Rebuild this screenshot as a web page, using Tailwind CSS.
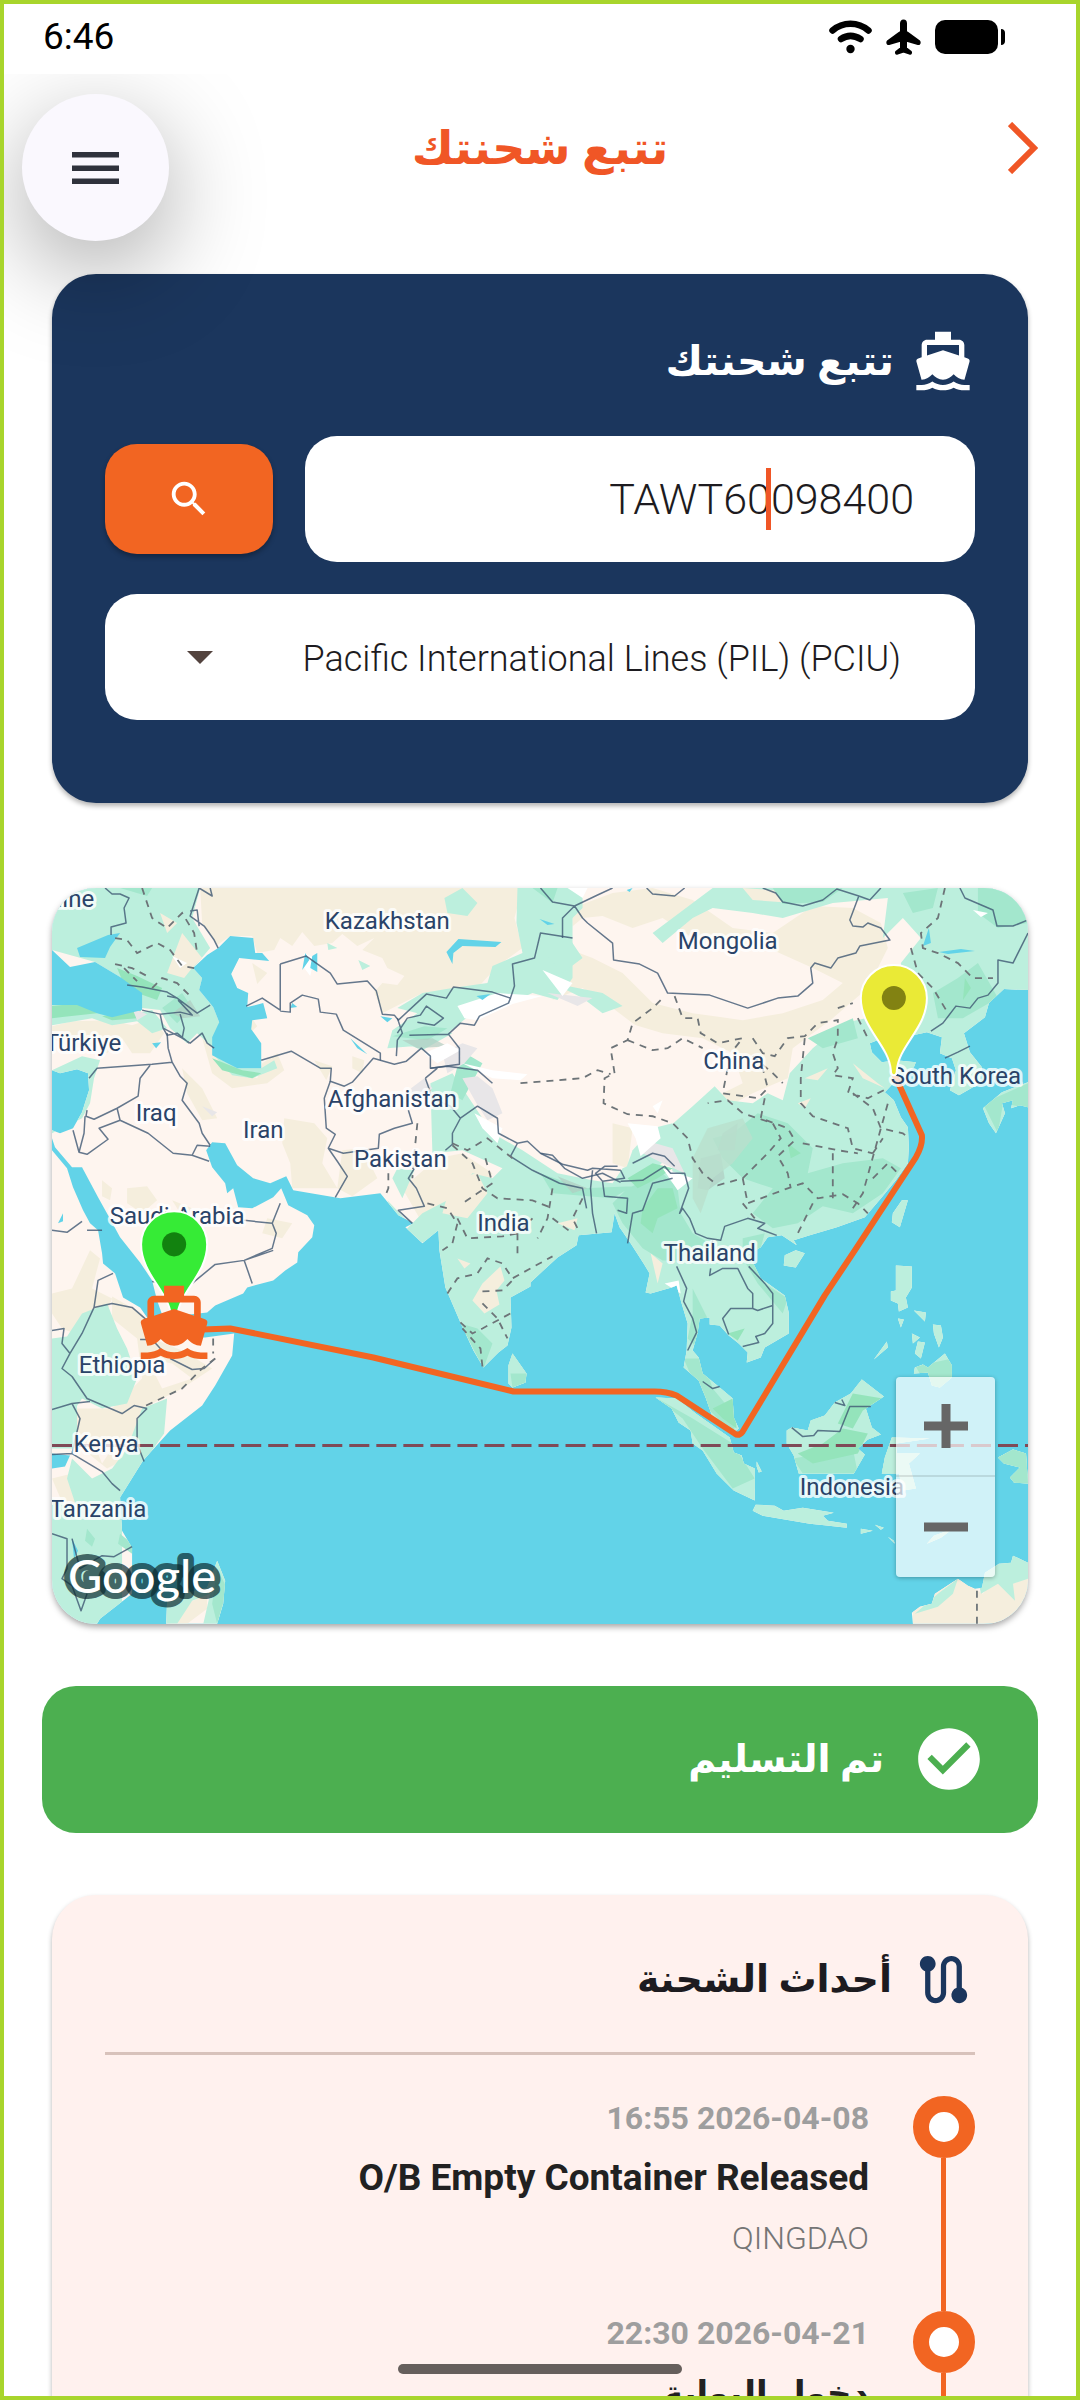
<!DOCTYPE html>
<html lang="ar" dir="rtl">
<head>
    <meta charset="UTF-8">
    <meta name="viewport" content="width=device-width, initial-scale=1.0">
    <title>تتبع شحنتك</title>
    <script src="https://cdn.jsdelivr.net/npm/@tailwindcss/browser@4"></script>
    <style>
        body {
            font-family: Roboto, 'DejaVu Sans', sans-serif;
        }
        .label {
            font-size: 24px;
            fill: #2a4368;
            stroke: rgba(255, 255, 255, 0.8);
            stroke-width: 6px;
            stroke-linejoin: round;
            paint-order: stroke;
            text-anchor: middle;
        }
    </style>
</head>
<body class="relative h-screen overflow-hidden bg-white text-[#1d1b20]">

    <!-- Status bar -->
    <div dir="ltr" class="relative z-20 flex h-[74px] items-center justify-between bg-white pl-[43px] pr-[75px] text-black">
        <span class="text-[37px] leading-[44px]">6:46</span>
        <div class="flex items-center gap-[14px]">
            <svg class="h-[34px] w-[43px]" viewBox="0 0 43 34" fill="none" stroke="#000" stroke-linecap="round">
                <path d="M3.5 10.5C14 1.5 29 1.5 39.5 10.500" stroke-width="6.5"/>
                <path d="M12 19C18 15 25 15 31.5 19" stroke-width="6.5"/>
                <circle cx="21.5" cy="29" r="4.2" fill="#000" stroke="none"/>
            </svg>
            <svg class="h-[36px] w-[35px]" viewBox="0 0 35 36" fill="#000" stroke="#000" stroke-width="2" stroke-linejoin="round">
                <path d="M17.5 1.5C15.8 1.5 15 3 15 4.5V12.5L2 22C1 23 1 25.5 3 25L15 21.5V29L10.5 32.5C9.5 33.5 10 35 11.5 34.5L17.5 32.5L23.5 34.5C25 35 25.5 33.5 24.5 32.5L20 29V21.5L32 25C34 25.5 34 23 33 22L20 12.5V4.5C20 3 19.2 1.5 17.5 1.5Z"/>
            </svg>
            <svg class="h-[34px] w-[70px]" viewBox="0 0 70 34" fill="#000">
                <rect x="0" y="0" width="63" height="34" rx="10"/>
                <path d="M66 9C69 9 70 11 70 13V21C70 23 69 25 66 25Z"/>
            </svg>
        </div>
    </div>

    <!-- Floating menu button -->
    <button type="button" aria-label="القائمة" class="absolute left-[22px] top-[94px] z-10 flex size-[147px] items-center justify-center rounded-full bg-[#faf8fe] shadow-[0_28px_96px_rgba(0,0,0,0.34)]">
        <svg class="h-[32px] w-[47px]" viewBox="0 0 47 32" fill="#2f323c">
            <rect width="47" height="5.5"/>
            <rect y="13.5" width="47" height="5.5"/>
            <rect y="26.5" width="47" height="5.5"/>
        </svg>
    </button>

    <header class="relative flex h-[148px] items-center justify-center">
        <h1 class="text-[46px] font-bold leading-[60px] text-[#f05626]">تتبع شحنتك</h1>
        <a href="#" aria-label="رجوع" class="absolute right-[42px]">
            <svg class="h-[52px] w-[30px]" viewBox="0 0 30 52" fill="none" stroke="#f05626" stroke-width="6">
                <path d="M2 2L26 26L2 50"/>
            </svg>
        </a>
    </header>

    <main class="px-[42px] pt-[52px]">

        <!-- Search card -->
        <form class="mx-[10px] rounded-[44px] bg-[#1b365d] px-[53px] pb-[83px] pt-[53px] shadow-[0_3px_5px_rgba(0,0,0,0.3)]">
            <div class="mb-[41px] flex h-[68px] items-center gap-[17px]">
                <svg class="size-[64px]" viewBox="0 0 24 24" fill="#fff">
                    <path d="M20 21c-1.39 0-2.78-.47-4-1.32-2.44 1.71-5.56 1.71-8 0C6.78 20.53 5.39 21 4 21H2v2h2c1.38 0 2.74-.35 4-.99 2.52 1.29 5.48 1.29 8 0 1.26.65 2.62.99 4 .99h2v-2h-2zM3.95 19H4c1.6 0 3.02-.88 4-2 .98 1.12 2.4 2 4 2s3.02-.88 4-2c.98 1.12 2.4 2 4 2h.05l1.89-6.68c.08-.26.06-.54-.06-.78s-.34-.42-.6-.5L20 10.62V6c0-1.1-.9-2-2-2h-3V1H9v3H6c-1.1 0-2 .9-2 2v4.62l-1.29.42c-.26.08-.48.26-.6.5s-.15.52-.06.78L3.95 19zM6 6h12v3.97L12 8 6 9.97V6z"/>
                </svg>
                <h2 class="text-[41px] font-bold leading-[60px] text-white">تتبع شحنتك</h2>
            </div>
            <div class="mb-[32px] flex items-center gap-[32px]">
                <div class="relative min-w-0 flex-1">
                    <input type="text" dir="ltr" aria-label="رقم الحاوية" value="TAWT60098400" class="h-[126px] w-full rounded-[32px] bg-white pl-[40px] pr-[61px] text-right text-[43px] font-light text-[#1d1b20] outline-none">
                    <span class="absolute right-[204px] top-[32px] h-[62px] w-[5px] bg-[#f05626]"></span>
                </div>
                <button type="submit" aria-label="بحث" class="flex h-[110px] w-[168px] items-center justify-center rounded-[32px] bg-[#f26522] shadow-[0_3px_5px_rgba(0,0,0,0.3)]">
                    <svg class="size-[46px]" viewBox="0 0 24 24" fill="#fff">
                        <path d="M15.5 14h-.79l-.28-.27C15.41 12.59 16 11.11 16 9.5 16 5.91 13.09 3 9.5 3S3 5.91 3 9.5 5.91 16 9.5 16c1.61 0 3.09-.59 4.23-1.57l.27.28v.79l5 4.99L20.49 19l-4.99-5zm-6 0C7.01 14 5 11.99 5 9.5S7.01 5 9.5 5 14 7.01 14 9.5 11.99 14 9.5 14z"/>
                    </svg>
                </button>
            </div>
            <div class="relative">
                <select dir="ltr" aria-label="الخط الملاحي" class="h-[126px] w-full appearance-none rounded-[32px] bg-white pl-[150px] pr-[74px] pt-[4px] text-[36px] font-light text-[#1d1b20] outline-none [text-align-last:right]">
                    <option>Pacific International Lines (PIL) (PCIU)</option>
                </select>
                <svg class="pointer-events-none absolute left-[82px] top-[57px] h-[13px] w-[26px]" viewBox="0 0 26 13" fill="#53433e">
                    <path d="M0 0H26L13 13Z"/>
                </svg>
            </div>
        </form>

        <!-- Map -->
        <section dir="ltr" class="relative mx-[10px] mt-[85px] overflow-hidden rounded-[44px] shadow-[0_3px_6px_rgba(0,0,0,0.35)]">
            <svg class="block w-full bg-[#62d3e8]" viewBox="0 0 975 735">
                <defs>
                    <path id="land" d="M0 0H975V102L951 101 936 115 932 129 911 145 917 164 929 179 927 195 906 207 897 202 903 182 899 170 887 165 889 149 874 144 860 147 853 159 832 149 817 155 819 164 829 174 843 172 863 174 861 179 846 189 832 204 841 212 848 229 855 239 856 259 855 275 843 292 829 309 812 329 784 339 757 347 741 352 744 357 729 347 715 349 708 359 696 366 708 390 732 407 736 424 736 445 712 459 708 469 694 474 695 464 686 455 676 447 667 437 657 436 657 429 647 430 645 444 640 462 646 469 650 485 667 499 680 510 681 529 686 540 681 544 660 529 653 509 646 492 631 479 634 462 635 435 629 415 624 397 619 399 598 405 593 404 597 385 591 375 578 355 567 339 562 325 559 344 526 347 524 357 505 369 478 394 478 398 458 409 459 439 455 457 446 464 431 479 421 462 408 434 393 399 387 362 386 342 370 355 353 339 361 335 346 327 328 305 288 310 241 302 234 288 218 295 201 290 185 277 173 255 160 254 154 262 160 279 173 295 175 305 181 300 186 319 200 320 221 309 229 300 236 317 255 327 262 337 260 349 246 364 245 374 233 382 221 392 195 399 191 405 163 417 155 424 111 429 105 412 100 392 88 374 68 349 56 327 46 309 30 279 20 279 3 259 0 250V242L8 245 21 240 30 224 37 202 36 185 25 181 8 185 0 182Z
                        M0 262L15 280 21 299 31 322 38 335 46 342 50 365 51 375 63 385 71 409 88 419 95 429 121 449 153 449 182 445 180 467 163 497 150 517 118 542 91 572 68 609 70 642 80 659V705L48 730 45 735H0Z
                        M460 465L474 485 473 494 460 499 456 495V477Z
                        M165 672L173 692 171 715 165 735H114L115 712 131 705 155 699Z
                        M603 509L624 510 643 525 677 549 681 564 689 567 691 575 702 580V612L681 602 664 585 650 562 640 555 638 542 626 534 619 520Z
                        M703 616L722 617 731 622 750 619 781 624 770 627 775 632 794 635V639L757 635 710 627 700 622Z
                        M809 491L831 508 813 520 819 539 828 546 815 551 805 560 812 566 801 585H746L741 567 734 555V542L739 539 755 542 758 532 772 527 782 514 798 505Z
                        M839 549L877 550 843 555 844 565 867 565 856 575 863 600 850 602 846 585H829L832 569Z
                        M843 377L859 378V399L853 409 855 419 846 423 845 415 838 412V403L843 402Z
                        M861 422L873 424 872 433Z M845 430L851 431 848 439Z M880 436L888 437 890 449 886 459 881 445Z M859 445L867 449 860 455Z M865 453L872 454 868 470 862 465Z M834 453L835 459 821 471Z
                        M892 465L899 477V489L887 499 879 497 875 484 861 485 862 479 870 476 875 479Z
                        M849 312L855 312 847 339 839 334 840 325Z M732 367L743 362 752 365 743 379 731 377Z
                        M930 220L949 204 975 194V219L967 217 958 220 960 212 949 215 952 225 943 245 936 235Z
                        M860 735L859 724 867 718 879 715 882 705 905 690 915 697 922 700 929 699 932 684 946 675 958 674 960 667 975 674V735Z
                        M945 569L960 561 973 565 974 580 975 595 961 594 957 589 967 579 951 575Z
                        M704 573L709 583 706 584 704 578Z M808 640L820 642 808 645Z M822 636L831 639 828 641Z M835 648L841 652 842 655Z M874 655L881 647 900 640 888 649Z"/>
                    <clipPath id="land-clip"><use href="#land"/></clipPath>
                </defs>
                <use href="#land" fill="#fef5ef"/>

                <g clip-path="url(#land-clip)">
                    <!-- Steppe and dry land -->
                    <g fill="#f5eedd">
                        <path d="M148 0H470L462 30 470 60 445 78 425 100 400 108 370 105 350 115 330 125 322 104 330 95 345 97 352 88 335 80 330 70 310 62 322 50 305 58 290 46 280 55 262 58 250 44 240 58 228 50 222 62 205 65 200 48 178 48 165 57 150 35Z"/>
                        <path d="M60 132L80 137 100 130 112 145 98 165 80 165 70 150 55 165 40 158 20 160 0 150V138L20 133Z"/>
                        <path d="M150 150L178 180 205 190 210 175 225 165 232 182 215 195 180 200 160 185Z M130 180L150 200 165 230 150 232 135 205Z M232 230L262 235 275 250 270 275 285 300 240 300 238 275 230 255Z M290 262L310 260 325 290 300 308 285 300Z"/>
                        <path d="M200 75L215 85 205 96Z M195 123L205 138 193 150Z M175 120L192 135 182 145Z M300 168L312 172 310 185 300 180Z M262 172L280 178 274 192Z"/>
                        <path d="M50 292L60 300 58 312 50 308Z M75 300L95 298 105 312 90 325 75 315Z M120 312L140 320 130 328Z M215 330L240 335 230 350 210 345Z M38 362L48 370 40 400 60 410 45 450 30 448 10 440 0 425V405L20 400Z"/>
                        <path d="M60 408L90 425 100 450 130 462 160 480 130 500 100 515 90 545 75 570 55 580 30 560 20 520 60 520 90 490 85 450 60 430Z M0 590L20 585 30 610 15 625Z"/>
                        <path d="M350 300L385 270 410 265 440 285 430 305 405 310 390 330 370 335Z M400 365L420 370 410 378Z M405 385L430 400 425 420 415 415 403 395Z M440 380L452 390 445 415 452 430 440 438 425 430Z"/>
                        <path d="M520 20L560 5 600 0 640 12 680 40 720 45 760 18 800 20 828 35 835 60 815 100 780 130 740 160 735 190 700 205 672 220 650 200 640 170 600 150 560 120 530 100 500 112 520 60Z"/>
                        <path d="M850 75L875 55 890 75 880 110 860 120 840 95Z M560 235L580 240 575 280 560 275Z"/>
                        <path d="M860 735V715L905 690 930 705 950 680 975 690V735Z M125 720L155 705 155 720 135 735H118Z"/>
                    </g>
                    <g fill="#fef5ef">
                        <path d="M500 55L530 30 550 28 580 40 610 30 640 50 680 60 720 62 760 80 790 95 770 112 730 125 690 132 640 125 600 115 570 85 540 70Z"/>
                        <path d="M560 130L610 145 650 150 680 165 690 195 650 215 600 190Z M262 62L285 65 300 85 280 88Z M95 470L120 475 140 490 110 500Z M40 550L60 560 50 575Z"/>
                    </g>

                    <!-- Vegetation -->
                    <g fill="#bcefdd">
                        <path d="M0 0H148L140 30 158 60 141 80 150 90 147 102 161 119 167 134 161 160 145 145 135 155 118 140 108 122 90 120 68 89 43 74 0 62Z"/>
                        <path d="M0 117L25 117 60 129 100 122 115 140 100 145 85 133 60 137 40 130 0 137Z M0 182L30 168 48 172 42 190 38 215 30 230 0 245Z M160 165L185 180 209 180 222 172 225 180 200 190 180 187Z"/>
                        <path d="M465 0H520V90L505 112 480 105 455 116 420 125 395 145 360 158 335 160 340 142 365 125 345 120 370 105 400 100 435 95 440 78 470 65 464 35Z M392 10L410 0 425 15 415 28 395 25Z M275 55L285 60 276 62Z M306 72L318 78 310 82Z M340 150L365 148 380 138 400 145 370 162Z"/>
                        <path d="M378 195L400 185 420 215 440 245 470 262 505 285 540 292 560 295 570 280 595 270 620 285 615 240 640 218 662 198 675 212 700 215 715 205 730 212 737 185 760 160 790 135 822 128 840 120 850 95 848 75 868 50 850 30 830 50 835 10 780 15 730 30 700 25 660 20 640 30 610 55 600 45 640 15 660 0H975V600H380L372 355 350 345 370 325 395 312 420 285 440 290 450 280 410 262 380 265Z"/>
                        <path d="M335 312L352 330 340 325Z M345 280L362 282 350 310 340 290Z M500 95L550 105 570 118 550 125 530 110Z M488 0H530V20L510 40 530 70 510 85 488 60Z"/>
                        <path d="M600 240L620 235 618 265 600 285 570 290 580 262Z"/>
                        <path d="M30 425L55 415 65 440 75 460 85 490 75 515 50 520 30 510 20 525 0 520V450L15 448Z M0 520L25 515 25 560 0 560Z M20 570L40 590 60 580 75 560 90 520 115 510 112 545 80 590 70 640V740H0V610L25 620 15 590Z"/>
                        <path d="M114 660H180V740H150L158 705 140 712 125 735H114Z M455 460H480V500H455Z M600 500H705V640H600Z M700 610H800V645H700Z M720 480H870V610H720Z M805 630H900V660H805Z M925 690L940 660H975V690L960 695 962 712 945 695 928 705Z M862 725L885 705 905 690 900 705 885 718Z M940 560H975V600H940Z"/>
                    </g>
                    <g fill="#f5eedd">
                        <path d="M400 290L425 285 435 305 415 330 390 325Z M405 370L418 375 412 380Z M448 378L452 392 444 402 447 416 432 425 420 412 430 395Z M690 0L760 5 740 15 700 12Z M745 215L758 210 752 220Z M752 190L775 180 765 192Z M800 175L825 195 832 200 810 190Z M115 85L130 45 150 70 140 80 132 90Z M108 25L125 35 115 45Z M598 365L610 375 605 395Z M505 335L525 330 522 342Z"/>
                    </g>

                    <!-- Forest -->
                    <g fill="#a3e7cd">
                        <path d="M705 225L735 235 760 260 755 285 790 275 830 270 848 280 830 305 800 325 770 318 745 335 720 340 700 325 720 300 690 290 670 270 660 250 680 245Z"/>
                        <path d="M575 300L610 285 625 300 628 325 640 345 665 360 655 372 610 372 590 360 570 335 560 315Z M488 285L530 300 580 298 560 310 500 305Z M690 350L712 345 705 370 712 395 735 410 730 425 705 395 690 370Z"/>
                        <path d="M720 0H790L770 14 730 16Z M850 5L885 0 880 20 860 25Z M925 0H975V35L945 40 925 25Z M885 130L880 105 905 90 925 75 945 110 910 130Z M755 150L800 130 805 150 770 160Z"/>
                        <path d="M631 470L650 470 660 500 685 530 680 545 650 515Z M603 509L640 530 680 555 702 590 680 600 650 560 630 530Z M640 400L655 430 645 460 635 450 640 425Z M740 570L800 560 805 585H750Z M940 560H975V600H940Z M863 478L899 470V500H875Z"/>
                        <path d="M408 435L425 440 440 455 431 480Z M458 485L474 485 473 494 460 499Z M165 680L175 700 165 735 160 715Z M35 640L43 650 40 658 33 652Z M68 645L80 655 80 665 66 655Z M430 175L418 168 405 178 398 205 410 212Z M930 215L975 195V220L950 215 945 245Z"/>
                        <path d="M68 0L100 0 95 8Z M110 120L130 105 140 120 125 135Z M340 148L372 138 395 140 375 152Z M480 0L505 0 500 15Z"/>
                    </g>
                    <g fill="#94e4bb">
                        <path d="M65 80L85 88 110 100 105 112 85 105 70 92Z M0 118L30 115 45 125 0 130Z M50 128L90 120 85 130 60 132Z M160 170L190 182 209 185 200 190 170 182Z"/>
                        <path d="M590 320L605 300 620 300 625 320 605 330 600 345 588 335Z M575 290L600 275 620 280 605 290 585 300Z M790 540L815 545 805 565 760 575 745 565 770 555Z M800 505L830 510 810 522 800 540 785 535Z M912 90L918 100 910 112Z M660 520L680 510 684 540 670 530Z M675 445L692 440 685 452Z M735 255L748 265 738 270Z"/>
                    </g>

                    <!-- Relief and snow -->
                    <g fill="#b0cdc2" opacity=".7">
                        <path d="M648 270L668 265 672 290 655 302 645 300Z M670 245L685 235 682 262 665 262Z M505 288L535 300 520 305Z M395 158L380 150 350 152 365 160Z M120 125L138 112 148 128 130 130Z"/>
                    </g>
                    <path fill="#b9e0cd" opacity=".8" d="M640 270L655 240 690 230 700 250 680 275 660 290 648 325 640 310Z"/>
                    <g fill="#e8e6e8">
                        <path d="M390 165L410 155 425 160 412 175 395 185Z M410 190L425 188 440 200 450 225 435 232 424 215Z M352 205L372 190 380 200 365 212Z M585 250L620 260 632 285 610 275 590 265Z M150 218L165 224 160 228Z M495 105L540 110 525 118Z M80 120L95 126 85 132Z"/>
                    </g>
                    <g fill="#fff">
                        <path d="M405 118L445 105 490 108 460 116 425 132 412 130Z M372 165L395 155 408 162 385 175Z M410 175L440 182 475 186 468 192 440 190Z M422 225L450 240 445 255 430 240Z M575 235L605 238 608 250 588 268 583 250Z M600 218L610 212 605 225Z M610 280L640 290 625 302Z M490 82L520 95 510 108Z M920 22L935 25 928 29Z M612 395L626 392 628 405Z M252 65L262 70 258 88 252 80Z M120 68L135 75 128 80Z M515 0L535 0 530 10Z"/>
                    </g>
                </g>

                <!-- Inland water -->
                <g fill="#62d3e8">
                    <path d="M0 62L18 79 43 74 68 89 90 105V122L60 129 45 125 25 117H0Z M25 60L56 47 68 45 58 59 53 70 28 69Z"/>
                    <path d="M178 48L201 50 203 65 210 65 217 73 187 70 179 86 185 100 196 105 195 119 211 115 215 130 200 132 199 141 209 155V180H185L160 167V149L167 134 161 119 147 102 150 90 141 80 155 67 166 60Z"/>
                    <path d="M394 64L406 51 449 54 443 59 410 58 401 65 400 76Z M250 82L253 65 257 72Z M260 68L265 65 265 84 258 80Z M240 115L245 119 238 120Z M100 155L109 154 104 160Z M328 128L340 130 335 134Z M424 108L438 106 430 112Z M487 31L502 36 495 37Z M886 64L908 61 922 63 895 66Z M876 40L878 55 870 58Z M298 150L315 166 305 160Z M574 2L580 0 577 4Z M6 335L11 325V333Z"/>
                    <path d="M0 565L18 567 13 578 0 580Z M20 650L26 662 22 670Z"/>
                </g>

                <!-- Country borders -->
                <g fill="none" stroke="#3f5873" stroke-opacity=".8" stroke-width="1.5" stroke-linejoin="round">
                    <path d="M53 0L60 6H68L77 10 72 20 74 35 59 39V47 M147 0L138 28 152 38 162 52 166 60 M147 0L160 8 158 0 M138 23L145 22 147 38"/>
                    <path d="M75 97L90 99 115 104 125 110 145 125 158 117 M90 122L108 126 111 140 130 150 138 155 150 145 155 155 162 160 M108 126L128 124 140 127 126 112 M115 108L125 110 M128 126L132 140 130 150 M111 140L115 147 125 145 137 155"/>
                    <path d="M37 190L45 180 100 176 120 174 128 188 135 195 130 212 147 235 150 245 158 257 M115 145L116 160 120 174 M98 177L88 190 86 208 65 220 42 231 34 228 35 222 M65 220L68 232 47 240 56 251 35 266 27 264 21 242 M27 264L32 245 33 228 M68 232L96 245 121 265 140 267 145 257 158 258 M140 267L157 273"/>
                    <path d="M228 76V122L210 110 194 118 M228 76L254 68 278 85 285 96 315 93 324 103 330 126 342 127 346 132 374 106 394 110 401 99 440 104 458 110 462 98 460 76 482 70 488 45 520 50 M228 123L238 124 238 115 250 107 266 111 268 124 284 126 291 142 328 165V172L321 170 300 194 292 198 278 193 279 180 268 180 239 163 209 172"/>
                    <path d="M278 193L272 210 274 240 283 246 276 260 291 265 326 260 327 246 342 240 360 235 356 222 M276 260L285 273 295 288 283 309 M328 172L342 176 354 173 369 160 378 168V180L407 176 407 160 396 146 408 135 422 137 427 128 456 115 458 110 M345 130L350 145 345 152 344 168 M357 147L396 146 M345 145L355 130 368 127 374 118 391 130 382 137 365 134"/>
                    <path d="M378 180L395 178 425 182 440 195 M373 190L385 180 M373 190L380 210 398 218 408 230 400 245 400 256 393 262 M408 230L425 218 445 230 446 245 465 255 475 253 488 265 500 267 512 280 530 290 550 285 568 294 M465 255L458 268 480 282 507 295 530 300 534 320"/>
                    <path d="M360 335L346 322 372 318 364 300 356 290 362 280"/>
                    <path d="M488 0L500 14 522 18 530 30 535 35 560 55 561 72 587 76 605 85 615 105 657 107 695 120 725 110 745 108 760 95 758 80 762 75 778 80 785 70 803 65 807 58 837 52 828 40 815 35 810 39 800 38 797 32 806 8 784 1 770 12 750 18 730 14 723 5 710 0 M522 18L545 7 560 0 M594 0L600 6 622 8 632 0 M806 8L817 12 828 0 M907 0L912 10 940 22 944 38 960 38 975 32 M510 50V30L522 18 M975 45L960 75 945 72 945 95 935 107 925 110 917 120 903 118 890 135 878 143 M892 170L905 164 917 158"/>
                    <path d="M488 265L510 276 535 282 540 280 568 282 572 290 550 293 543 285 552 278 565 278 M550 293L552 308 575 310 574 325 565 322 M540 282L538 300 540 325 544 345 M568 293L590 292 612 278 618 285 632 285 636 300 627 325 630 320 637 330 643 345 655 350 668 352 672 338 695 330 712 335 705 340 724 347 M580 275L600 265 612 268 622 278 M575 355L580 325 590 322 600 295 620 290"/>
                    <path d="M624 378L634 400 631 413 640 430 644 444 635 462 M658 380L657 387 670 380 685 380 695 400 700 405 700 420 678 420 670 430 676 446 M700 420L705 422 720 417 720 435 712 445 703 448 706 454 690 458 M696 378L712 395 720 405V418 M660 352L655 375 M650 493L660 500 667 498"/>
                    <path d="M739 539L750 548 761 547 765 542 787 543 797 518 818 518 M782 514L792 517 789 511"/>
                    <path d="M0 342L15 344 30 333 M35 342H50 M42 419L60 415 80 419 95 432 M42 419L46 392 61 385 M42 419L30 445 18 465 10 480 20 488 35 510 70 525 82 517 95 520 M0 442L12 440 10 455 18 465 M0 521L20 515 38 513 M20 515L28 530 20 565 0 566 M20 565L50 583 60 595 68 602 M95 520L85 530V555L92 573 M118 470L140 481 152 480 163 470 M100 393L115 395 M88 451H100L110 462 M140 395L163 376 192 372 221 362 M192 372L200 395 M192 332L220 335 224 345 220 360 192 372 M220 335L228 315"/>
                    <path d="M0 645L15 650V680L10 690 20 697 29 722 35 705 M20 650L28 680 50 667 62 668 80 658"/>
                </g>

                <!-- Region borders -->
                <g fill="none" stroke="#6d7478" stroke-width="1.8" stroke-dasharray="7 6">
                    <path d="M90 0L100 30 115 40 130 25 142 45 145 65 M63 50L75 52 85 65 105 55 118 62 130 78 142 80 M63 76L80 80 95 88 M100 100L110 90 125 95 138 108 M72 80L85 93"/>
                    <path d="M468 195L530 190 545 182 558 186 M608 112L600 120 580 135 575 152 558 160 562 185 552 190 551 215 575 226 600 228 620 235 635 250 640 270 650 285 665 297 690 290 715 265 728 250 720 235 690 225 675 212 655 215"/>
                    <path d="M622 108L630 130 645 130 648 145 665 155 690 150 682 160 M575 152L600 162 615 160 630 150 650 160 M700 150L710 165 722 168 735 150 752 148 765 135 785 132 785 150 780 165 785 180 780 187 800 190 795 205 815 210 835 200 M752 150L748 190 748 215 760 228 795 240 800 260 820 265 M700 168L720 185 730 195 M675 180L670 205 705 210 715 200 710 180 M712 210L708 230 735 240 742 252 725 268 735 285 738 300 M750 255L785 262 805 265 M780 265V310 M800 205L820 220 828 240 850 245 856 250 M820 265L830 250 M820 290L835 275 850 290 M690 290L695 315 735 300 750 295 765 310 790 306 805 315 815 325 M760 315L745 345 M690 315L702 330"/>
                    <path d="M892 0L885 30 868 45 870 60 885 65 905 75 920 90 940 90 M858 60L865 85 880 100 895 125 M785 120L800 115 M805 130L815 150 M800 320L810 305 835 215"/>
                    <path d="M400 257L420 275 430 300 445 310 480 312 500 320 M400 255L415 262 435 250 460 270 M433 270L440 295 425 305 410 315 M375 315L395 320 405 335 400 355 390 362 M405 330L415 350 450 348 465 345 480 330 M465 345V365 M500 300L495 330 485 350 M530 310L520 330 525 340 M365 235L362 265 360 290 M336 285V300L332 310"/>
                    <path d="M395 405L405 390 425 385 435 370 450 375 460 390 478 380 500 368 M430 403L450 402 460 392 M408 434L420 445 430 440 458 425 M430 415L445 430 455 450 M430 478L428 460 410 440"/>
                    <path d="M94 517L130 500 150 480 163 470 M161 450V465 M924 702V735 M500 330L520 345"/>
                </g>

                <!-- Equator -->
                <path d="M0 557H975" fill="none" stroke="#7f4a57" stroke-width="3" stroke-dasharray="20 7"/>

                <!-- Shipping route -->
                <path d="M122 442L178 440 321 469 461 503 602 503Q614 503 624 507L682 545Q686 548 690 543L772 407 802 362 863 269Q870 257 869 247L841 185" fill="none" stroke="#f26522" stroke-width="6" stroke-linejoin="round"/>

                <g>
                    <text class="label" x="2" y="19">Ukraine</text>
                    <text class="label" x="335" y="41">Kazakhstan</text>
                    <text class="label" x="675" y="61">Mongolia</text>
                    <text class="label" x="31" y="163">Türkiye</text>
                    <text class="label" x="681" y="181">China</text>
                    <text class="label" x="903" y="196">South Korea</text>
                    <text class="label" x="340" y="219">Afghanistan</text>
                    <text class="label" x="104" y="233">Iraq</text>
                    <text class="label" x="211" y="250">Iran</text>
                    <text class="label" x="348" y="279">Pakistan</text>
                    <text class="label" x="125" y="336">Saudi Arabia</text>
                    <text class="label" x="451" y="343">India</text>
                    <text class="label" x="657" y="373">Thailand</text>
                    <text class="label" x="70" y="485">Ethiopia</text>
                    <text class="label" x="54" y="563">Kenya</text>
                    <text class="label" x="799" y="606">Indonesia</text>
                    <text class="label" x="46" y="628">Tanzania</text>
                </g>

                <!-- Markers -->
                <g transform="translate(122 356)">
                    <path d="M0 77C-3 77-3 74-3 72C-5 47-33 30-33 0A33 33 0 0 1 33 0C33 30 5 47 3 72C3 74 3 77 0 77Z" fill="#36eb36" stroke="#fff" stroke-width="2"/>
                    <circle r="12" fill="#12820f"/>
                </g>
                <g transform="translate(841 110)">
                    <path d="M0 77C-3 77-3 74-3 72C-5 47-33 30-33 0A33 33 0 0 1 33 0C33 30 5 47 3 72C3 74 3 77 0 77Z" fill="#eaea36" stroke="#fff" stroke-width="2"/>
                    <circle r="12" fill="#828212"/>
                </g>
                <path transform="translate(82 394) scale(3.33)" fill="#f26522" d="M20 21c-1.39 0-2.78-.47-4-1.32-2.44 1.71-5.56 1.71-8 0C6.78 20.53 5.39 21 4 21H2v2h2c1.38 0 2.74-.35 4-.99 2.52 1.29 5.48 1.29 8 0 1.26.65 2.62.99 4 .99h2v-2h-2zM3.95 19H4c1.6 0 3.02-.88 4-2 .98 1.12 2.4 2 4 2s3.02-.88 4-2c.98 1.12 2.4 2 4 2h.05l1.89-6.68c.08-.26.06-.54-.06-.78s-.34-.42-.6-.5L20 10.62V6c0-1.1-.9-2-2-2h-3V1H9v3H6c-1.1 0-2 .9-2 2v4.62l-1.29.42c-.26.08-.48.26-.6.5s-.15.52-.06.78L3.95 19zM6 6h12v3.97L12 8 6 9.97V6z"/>

                <text x="16" y="704" font-family="Lato, sans-serif" font-size="47" font-weight="500" fill="#fff" stroke="#0b2a30" stroke-opacity=".7" stroke-width="12" stroke-linejoin="round" paint-order="stroke">Google</text>
            </svg>
            <div class="absolute bottom-[47px] right-[33px] flex w-[99px] flex-col rounded-[4px] bg-white/70 shadow-[0_1px_4px_rgba(0,0,0,0.3)]">
                <button type="button" aria-label="تكبير" class="flex h-[100px] items-center justify-center border-b-2 border-black/10">
                    <svg class="size-[44px]" viewBox="0 0 44 44" stroke="#666" stroke-width="9"><path d="M22 0V44M0 22H44"/></svg>
                </button>
                <button type="button" aria-label="تصغير" class="flex h-[100px] items-center justify-center">
                    <svg class="size-[44px]" viewBox="0 0 44 44" stroke="#666" stroke-width="9"><path d="M0 22H44"/></svg>
                </button>
            </div>
        </section>

        <!-- Delivery status -->
        <div class="mt-[62px] flex h-[147px] items-center gap-[28px] rounded-[34px] bg-[#4caf50] px-[52px]">
            <svg class="size-[74px]" viewBox="0 0 24 24" fill="#fff">
                <path d="M12 2C6.48 2 2 6.48 2 12s4.48 10 10 10 10-4.48 10-10S17.52 2 12 2zm-2 15l-5-5 1.41-1.41L10 14.17l7.59-7.59L19 8l-9 9z"/>
            </svg>
            <p class="text-[38px] font-bold leading-[60px] text-white">تم التسليم</p>
        </div>

        <!-- Shipment events -->
        <section class="mx-[10px] mt-[62px] rounded-[44px] bg-[#fff1ee] px-[53px] pb-[53px] pt-[53px] shadow-[0_3px_5px_rgba(0,0,0,0.3)]">
            <div class="flex h-[63px] items-center gap-[20px]">
                <svg class="size-[63px]" viewBox="0 0 24 24" fill="#1b365d">
                    <path d="M19 15.18V7c0-2.21-1.79-4-4-4s-4 1.79-4 4v10c0 1.1-.9 2-2 2s-2-.9-2-2V8.82C8.16 8.4 9 7.3 9 6c0-1.66-1.34-3-3-3S3 4.34 3 6c0 1.3.84 2.4 2 2.82V17c0 2.21 1.79 4 4 4s4-1.79 4-4V7c0-1.1.9-2 2-2s2 .9 2 2v8.18A2.996 2.996 0 0 0 18 21c1.66 0 3-1.34 3-3 0-1.3-.84-2.4-2-2.82z"/>
                </svg>
                <h2 class="text-[38px] font-bold leading-[60px]">أحداث الشحنة</h2>
            </div>
            <hr class="mb-[41px] mt-[41px] border-t-[3px] border-[#d8c2bb]">
            <ol>
                <li class="flex h-[215px] gap-[43px]">
                    <div class="flex w-[63px] flex-col items-center">
                        <span class="size-[62px] shrink-0 rounded-full border-[16px] border-[#f26522] bg-white"></span>
                        <span class="w-[5px] flex-1 bg-[#f26522]"></span>
                    </div>
                    <div class="flex flex-1 flex-col gap-[8px]">
                        <time dir="ltr" class="text-right text-[32px] font-bold leading-[44px] text-[#9e9e9e]">16:55 2026-04-08</time>
                        <h3 dir="ltr" class="text-right text-[37px] font-bold leading-[60px] text-[#212121]">O/B Empty Container Released</h3>
                        <p dir="ltr" class="text-right text-[32px] font-light leading-[44px] text-[#757575]">QINGDAO</p>
                    </div>
                </li>
                <li class="flex h-[215px] gap-[43px]">
                    <div class="flex w-[63px] flex-col items-center">
                        <span class="size-[62px] shrink-0 rounded-full border-[16px] border-[#f26522] bg-white"></span>
                        <span class="w-[5px] flex-1 bg-[#f26522]"></span>
                    </div>
                    <div class="flex flex-1 flex-col gap-[8px]">
                        <time dir="ltr" class="text-right text-[32px] font-bold leading-[44px] text-[#9e9e9e]">22:30 2026-04-21</time>
                        <h3 class="text-[34px] font-bold leading-[60px] text-[#212121]">دخول البوابة</h3>
                    </div>
                </li>
            </ol>
        </section>
    </main>

    <!-- Home indicator -->
    <div class="absolute bottom-[26px] left-1/2 z-20 h-[10px] w-[284px] -translate-x-1/2 rounded-full bg-[#665f5c]"></div>

    <!-- Screen frame -->
    <div class="pointer-events-none absolute inset-0 z-30 border-4 border-[#a8d52c]"></div>
</body>
</html>
